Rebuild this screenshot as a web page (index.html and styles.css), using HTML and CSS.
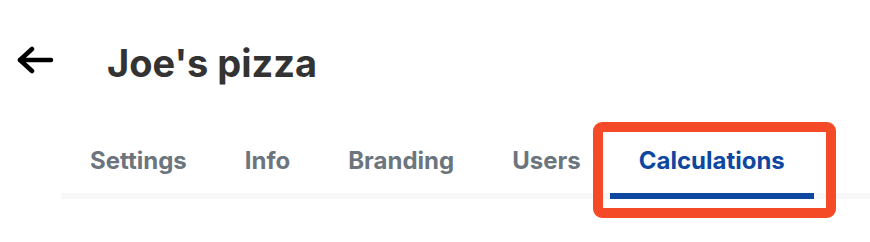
FILE: index.html
```html
<!DOCTYPE html>
<html lang="en">
<head>
<meta charset="utf-8">
<title>Joe's pizza</title>
<link rel="stylesheet" href="styles.css">
</head>
<body>
<header class="top">
  <button class="back" aria-label="Back">
    <svg width="40" height="28" viewBox="0 0 40 28" fill="none" stroke="#000" stroke-width="4.5" stroke-linecap="round" stroke-linejoin="round">
      <path d="M4 14H35"/>
      <path d="M16 3L4 14L16 25"/>
    </svg>
  </button>
  <h1 class="title">Joe's pizza</h1>
</header>
<nav class="tabs">
  <a class="tab">Settings</a>
  <a class="tab">Info</a>
  <a class="tab">Branding</a>
  <a class="tab">Users</a>
  <a class="tab active">Calculations<span class="highlight"></span></a>
</nav>
</body>
</html>
```
FILE: styles.css
```css
html, body {
  margin: 0;
  background: #fff;
}
body {
  width: 870px;
  height: 242px;
  overflow: hidden;
  font-family: Inter, "Noto Sans", sans-serif;
}
.top {
  display: flex;
  align-items: flex-start;
  margin-top: 39px;
  height: 48px;
}
.back {
  border: 0;
  background: none;
  padding: 0;
  margin: 7px 0 0 16px;
  width: 40px;
  height: 28px;
  display: block;
}
.back svg { display: block; }
.title {
  margin: 0 0 0 51px;
  font-size: 38px;
  line-height: 48px;
  font-weight: 700;
  color: #333;
}
.tabs {
  display: flex;
  margin: 60px 0 0 61px;
  border-bottom: 6px solid #f8f8f8;
}
.tab {
  position: relative;
  padding: 0 29px 18px;
  font-size: 24px;
  line-height: 28px;
  font-weight: 700;
  color: #6c757d;
  border-bottom: 6px solid transparent;
  margin-bottom: -6px;
}
.tab.active {
  color: #0d47a1;
  border-bottom-color: #0d47a1;
}
.highlight {
  position: absolute;
  left: -17px;
  right: -22px;
  top: -25px;
  bottom: -25px;
  border: 10px solid #f44a27;
  border-radius: 9px;
}
```
